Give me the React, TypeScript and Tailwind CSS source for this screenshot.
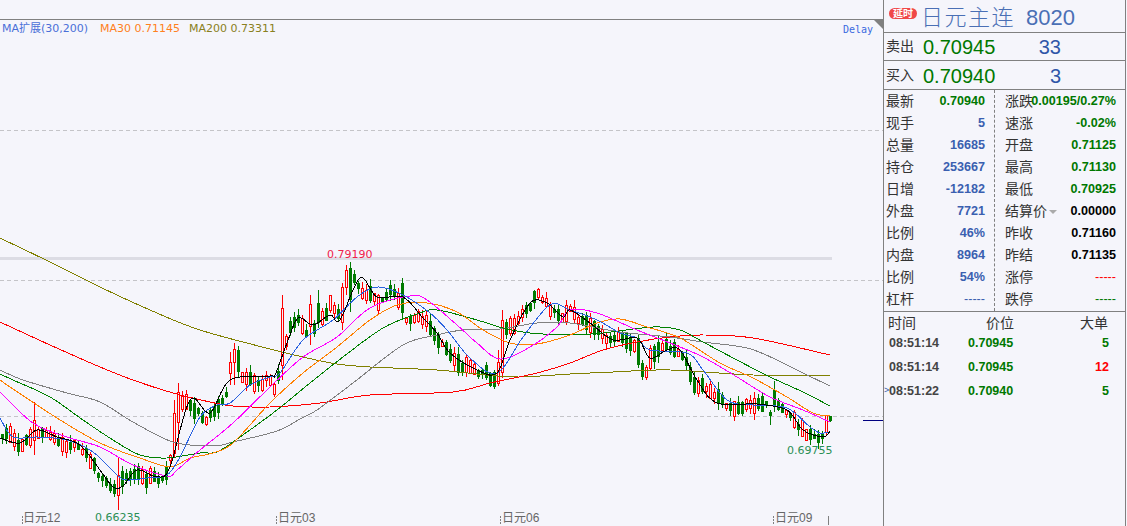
const LINES: { color: string; pts: number[][] }[] = [
  { color: "#808000", pts: [[0,238],[50,262],[100,287],[150,310],[200,330],[270,349],[303,357],[337,364],[370,367],[437,370],[487,375],[520,377],[570,374],[613,372],[670,370],[753,375],[830,375]] },
  { color: "#ff0000", pts: [[0,322],[50,345],[100,367],[133,380],[173,393],[210,402],[233,406],[270,407],[320,403],[370,395],[453,392],[490,383],[537,373],[570,363],[603,350],[637,342],[670,337],[703,335],[753,338],[830,355]] },
  { color: "#808080", pts: [[0,370],[23,380],[67,393],[100,402],[133,422],[173,442],[213,446],[233,442],[277,431],[300,419],[317,410],[353,383],[403,345],[437,335],[463,330],[500,329],[537,323],[570,323],[620,332],[670,337],[703,342],[747,348],[777,360],[803,373],[830,386]] },
  { color: "#008000", pts: [[0,374],[13,380],[50,397],[83,420],[113,440],[140,455],[167,458],[200,453],[217,452],[240,437],[277,410],[310,383],[343,357],[383,328],[417,314],[437,310],[477,320],[503,328],[530,333],[570,335],[603,333],[653,327],[680,330],[703,342],[737,360],[770,377],[803,392],[830,406]] },
  { color: "#ff8000", pts: [[0,380],[10,387],[57,418],[100,443],[140,458],[170,467],[190,458],[213,453],[233,443],[270,403],[303,373],[337,347],[370,320],[397,305],[427,303],[457,312],[483,330],[510,343],[537,344],[570,335],[597,323],[620,319],[647,327],[680,338],[720,363],[753,378],[787,397],[813,413],[830,416]] },
  { color: "#ff00ff", pts: [[0,392],[33,423],[67,437],[100,447],[133,465],[167,476],[177,470],[200,450],[233,423],[270,387],[303,357],[337,337],[370,308],[410,296],[427,300],[457,325],[477,343],[500,359],[530,347],[557,327],[570,310],[597,313],[637,330],[670,343],[703,357],[737,377],[770,397],[803,410],[830,422]] },
  { color: "#2a62e0", pts: [[0,418],[13,437],[37,437],[67,440],[93,452],[117,475],[127,480],[147,478],[167,475],[180,457],[200,417],[217,405],[230,403],[250,385],[270,377],[280,373],[303,340],[333,320],[357,297],[378,287],[403,295],[430,313],[447,330],[470,358],[497,373],[523,337],[550,305],[570,310],[597,320],[620,333],[637,338],[650,350],[687,353],[703,370],[727,400],[753,405],[787,408],[810,427],[820,433],[830,432]] },
  { color: "#000000", pts: [[0,438],[20,443],[37,430],[57,437],[80,445],[100,470],[113,487],[123,486],[137,470],[157,477],[170,467],[190,400],[210,413],[230,380],[270,376],[275,375],[287,343],[298,318],[313,325],[330,315],[340,320],[360,278],[377,297],[403,297],[423,318],[437,333],[450,353],[477,370],[497,373],[510,340],[530,303],[547,303],[563,317],[570,310],[590,323],[613,340],[637,338],[650,358],[667,350],[680,350],[697,380],[717,403],[757,404],[787,410],[803,430],[823,437],[830,431]] },
];

// centre of the candle body along the chart
const PATH = [[0,436],[8,433],[18,444],[28,440],[38,435],[48,436],[58,442],[68,447],[78,445],[88,455],[96,470],[104,483],[112,490],[128,476],[136,470],[144,478],[152,478],[160,480],[168,470],[174,430],[178,405],[185,400],[195,410],[205,420],[212,415],[222,400],[232,385],[237,375],[243,378],[248,375],[258,385],[270,378],[275,390],[280,370],[285,345],[292,322],[298,318],[305,335],[310,340],[318,313],[325,318],[330,300],[340,320],[347,290],[350,275],[355,280],[360,290],[370,295],[378,300],[385,295],[392,288],[398,298],[405,320],[410,322],[418,318],[425,322],[432,330],[440,345],[447,350],[455,360],[462,365],[470,365],[478,372],[485,372],[492,382],[497,375],[500,340],[510,325],[518,322],[525,308],[530,305],[536,295],[540,297],[548,305],[555,315],[562,318],[570,310],[580,320],[590,325],[600,335],[610,340],[620,338],[632,345],[638,352],[650,358],[660,345],[668,348],[677,352],[685,360],[692,378],[700,385],[710,390],[720,400],[728,405],[735,410],[745,403],[755,405],[765,403],[775,402],[785,410],[795,422],[805,433],[815,437],[822,434],[830,420]];

// top, bottom, high, low, rising
const BIG: Record<number, number[]> = {
  34: [420,440,402,455,1], 118: [475,495,458,510,1], 174: [413,453,400,458,1], 178: [392,422,383,450,1],
  230: [362,373,352,385,1], 234: [349,362,343,385,1], 238: [350,372,346,378,0],
  282: [308,365,295,380,1], 310: [304,326,295,345,1], 318: [303,323,290,328,0], 342: [287,322,283,330,1],
  346: [270,287,265,295,1], 350: [268,300,262,312,0], 402: [283,313,278,320,0], 458: [354,373,347,376,0],
  498: [362,383,350,386,1], 502: [320,372,310,378,1], 638: [338,365,335,368,0], 642: [363,377,360,380,0],
  646: [367,377,365,380,1], 650: [348,368,345,370,1], 690: [367,382,362,385,0], 694: [377,393,372,395,0],
  698: [380,393,377,397,1], 770: [412,416,410,425,0], 774: [390,407,381,412,0], 826: [415,432,415,436,1], 830: [416,421,416,422,0],
};

function yAt(x: number) {
  for (let i = 1; i < PATH.length; i++) {
    const [x0, y0] = PATH[i - 1];
    const [x1, y1] = PATH[i];
    if (x <= x1) return y0 + ((y1 - y0) * (x - x0)) / (x1 - x0);
  }
  return 420;
}

function noise(n: number) {
  const s = Math.sin(n * 12.9898) * 43758.5453;
  return s - Math.floor(s);
}

function makeCandles() {
  const out: { x: number; t: number; b: number; h: number; l: number; up: boolean }[] = [];
  for (let x = 2; x <= 830; x += 4) {
    const big = BIG[x];
    if (big) {
      out.push({ x, t: big[0], b: big[1], h: big[2], l: big[3], up: big[4] === 1 });
      continue;
    }
    const c = yAt(x) + (noise(x + 0.9) - 0.5) * 6;
    const size = 4 + noise(x) * 12;
    const t = Math.round(c - size / 2);
    const b = Math.round(c + size / 2);
    out.push({
      x, t, b,
      h: t - Math.round(noise(x + 0.3) * 7),
      l: b + Math.round(noise(x + 0.7) * 7),
      up: noise(x + 0.5) > 0.55,
    });
  }
  return out;
}

// smooth the traced points a little so the averages don't look like polylines
function curve(pts: number[][]) {
  let d = `M${pts[0][0]} ${pts[0][1]}`;
  for (let i = 0; i < pts.length - 1; i++) {
    const p0 = pts[Math.max(i - 1, 0)];
    const p1 = pts[i];
    const p2 = pts[i + 1];
    const p3 = pts[Math.min(i + 2, pts.length - 1)];
    const c1x = p1[0] + (p2[0] - p0[0]) / 6;
    const c1y = p1[1] + (p2[1] - p0[1]) / 6;
    const c2x = p2[0] - (p3[0] - p1[0]) / 6;
    const c2y = p2[1] - (p3[1] - p1[1]) / 6;
    d += ` C${c1x} ${c1y} ${c2x} ${c2y} ${p2[0]} ${p2[1]}`;
  }
  return d;
}

function Chart() {
  const candles = makeCandles();
  return (
    <div className="relative flex-1">
      <svg className="absolute inset-0 block" width="883" height="486" viewBox="0 39 883 486">
        <g stroke="#c4c4c8" strokeDasharray="4 3" shapeRendering="crispEdges">
          <line x1="0" x2="883" y1="130.5" y2="130.5" />
          <line x1="0" x2="883" y1="280.5" y2="280.5" />
          <line x1="0" x2="883" y1="416.5" y2="416.5" />
        </g>
        <rect x="0" y="257" width="832" height="3" fill="#dcdce4" />
        <g shapeRendering="crispEdges">
          {candles.map((c) => (
            <g key={c.x}>
              <line x1={c.x + 0.5} x2={c.x + 0.5} y1={c.h} y2={c.l} stroke={c.up ? "#ff0000" : "#007a00"} />
              {c.up ? (
                <rect x={c.x - 0.5} y={c.t + 0.5} width="2" height={Math.max(c.b - c.t, 1)} fill="#f5f5fb" stroke="#ff0000" />
              ) : (
                <rect x={c.x - 1} y={c.t} width="3" height={Math.max(c.b - c.t, 1)} fill="#007a00" />
              )}
            </g>
          ))}
        </g>
        {LINES.map((l) => (
          <path key={l.color} d={curve(l.pts)} fill="none" stroke={l.color} strokeWidth="1" shapeRendering="crispEdges" />
        ))}
        <line x1="863" x2="883" y1="420.5" y2="420.5" stroke="#000080" shapeRendering="crispEdges" />
        <g stroke="#808080" shapeRendering="crispEdges">
          <line x1="0" x2="883" y1="525.5" y2="525.5" />
          {[22, 276, 500, 773, 828].map((x) => (
            <line key={x} x1={x + 0.5} x2={x + 0.5} y1="516" y2="525" strokeDasharray={x === 828 ? undefined : "2 1"} />
          ))}
        </g>
      </svg>
      <span className="absolute left-[327px] top-[209px] font-['DejaVu_Sans',sans-serif] text-[11px] leading-[14px] text-[#f0204a]">0.79190</span>
      <span className="absolute left-[787px] top-[405px] font-['DejaVu_Sans',sans-serif] text-[11px] leading-[14px] text-[#2a8f55]">0.69755</span>
      <span className="absolute left-[95px] top-[472px] font-['DejaVu_Sans',sans-serif] text-[11px] leading-[14px] text-[#2a8f55]">0.66235</span>
      <span className="absolute left-[23px] top-[472px] text-[12px] leading-[14px] text-[#666666]">日元12</span>
      <span className="absolute left-[278px] top-[472px] text-[12px] leading-[14px] text-[#666666]">日元03</span>
      <span className="absolute left-[502px] top-[472px] text-[12px] leading-[14px] text-[#666666]">日元06</span>
      <span className="absolute left-[775px] top-[472px] text-[12px] leading-[14px] text-[#666666]">日元09</span>
    </div>
  );
}

const LEFT_ROWS = [
  ["最新", "0.70940", "text-[#007800]"],
  ["现手", "5", "text-[#3a5fb0]"],
  ["总量", "16685", "text-[#3a5fb0]"],
  ["持仓", "253667", "text-[#3a5fb0]"],
  ["日增", "-12182", "text-[#3a5fb0]"],
  ["外盘", "7721", "text-[#3a5fb0]"],
  ["比例", "46%", "text-[#3a5fb0]"],
  ["内盘", "8964", "text-[#3a5fb0]"],
  ["比例", "54%", "text-[#3a5fb0]"],
  ["杠杆", "-----", "text-[#3a5fb0] font-normal"],
];

const RIGHT_ROWS = [
  ["涨跌", "0.00195/0.27%", "text-[#007800]"],
  ["速涨", "-0.02%", "text-[#007800]"],
  ["开盘", "0.71125", "text-[#007800]"],
  ["最高", "0.71130", "text-[#007800]"],
  ["最低", "0.70925", "text-[#007800]"],
  ["结算价", "0.00000", "text-black"],
  ["昨收", "0.71160", "text-black"],
  ["昨结", "0.71135", "text-black"],
  ["涨停", "-----", "text-[#ff0000] font-normal"],
  ["跌停", "-----", "text-[#007800] font-normal"],
];

const TICKS = [
  ["08:51:14", "0.70945", "5", "text-[#007800]"],
  ["08:51:14", "0.70945", "12", "text-[#ff0000]"],
  ["08:51:22", "0.70940", "5", "text-[#007800]"],
];

function QuoteRow({ label, price, size }: { label: string; price: string; size: string }) {
  return (
    <>
      <span className="w-[37px] text-[14px] text-[#333333]">{label}</span>
      <span className="w-[72px] font-['Liberation_Sans',sans-serif] text-[20px] text-[#007800]">{price}</span>
      <span className="w-[66px] text-right font-['Liberation_Sans',sans-serif] text-[20px] text-[#2f56a8]">{size}</span>
    </>
  );
}

function StatRow({ label, value, color }: { label: string; value: string; color: string }) {
  return (
    <div className="flex h-[22px] items-center">
      <span className="w-[25px] shrink-0 whitespace-nowrap text-[14px] text-[#333333]">
        {label}
        {label === "结算价" && <span className="ml-[2px] inline-block border-x-[4px] border-t-[4px] border-x-transparent border-t-[#aaaaaa] align-middle" />}
      </span>
      <span className={`ml-auto whitespace-nowrap text-[12.6px] font-bold ${color}`}>{value}</span>
    </div>
  );
}

function SidePanel() {
  return (
    <div className="flex h-full w-[243px] flex-col border-x border-[#808080]">
      <div className="flex h-[33px] items-center border-b border-[#808080] pl-[5px]">
        <span className="mb-[5px] rounded-full bg-[#f04848] px-[4px] text-[10px] font-bold leading-[11px] text-white">延时</span>
        <span className="ml-[4px] mt-[3px] text-[22px] font-light leading-[32px] tracking-[1.5px] text-[#4a6fb5]">日元主连</span>
        <span className="ml-[11px] mt-[3px] font-['Liberation_Sans',sans-serif] text-[22px] leading-[32px] text-[#4a6fb5]">8020</span>
      </div>
      <div className="flex h-[28px] items-center border-b border-[#808080] pl-[2px]">
        <QuoteRow label="卖出" price="0.70945" size="33" />
      </div>
      <div className="flex h-[29px] items-center border-b border-[#808080] pl-[2px] pt-[1px]">
        <QuoteRow label="买入" price="0.70940" size="3" />
      </div>
      <div className="flex h-[222px] border-b border-[#808080]">
        <div className="w-[111px] border-r border-dashed border-[#808080] pl-[2px] pr-[9px]">
          {LEFT_ROWS.map(([l, v, c], i) => <StatRow key={i} label={l} value={v} color={c} />)}
        </div>
        <div className="flex-1 pl-[10px] pr-[9px]">
          {RIGHT_ROWS.map(([l, v, c], i) => <StatRow key={i} label={l} value={v} color={c} />)}
        </div>
      </div>
      <div className="flex h-[19px] items-center whitespace-nowrap pl-[4px] pt-[3px] text-[14px] text-[#333333]">
        <span className="w-[98px]">时间</span>
        <span className="w-[94px]">价位</span>
        <span>大单</span>
      </div>
      {TICKS.map(([t, p, n, c], i) => (
        <div key={i} className="relative flex h-[24px] items-center pl-[5px] text-[12.5px] font-bold">
          {i === 2 && <span className="absolute left-[0px] text-[9px] font-normal text-[#2f56a8]">&gt;</span>}
          <span className="w-[79px] text-[#444444]">{t}</span>
          <span className="w-[60px] text-[#007800]">{p}</span>
          <span className={`w-[81px] text-right ${c}`}>{n}</span>
        </div>
      ))}
    </div>
  );
}

export default function App() {
  return (
    <div className="flex h-[526px] w-[1127px] overflow-hidden bg-[#f5f5fb] font-['Liberation_Sans','Noto_Sans_CJK_SC',sans-serif]">
      <div className="relative flex w-[883px] flex-col">
        <div className="h-[20px] border-b border-[#808080]" />
        <div className="flex h-[19px] items-center pl-[2px] pb-[1px] font-['DejaVu_Sans','Noto_Sans_CJK_SC',sans-serif] text-[11px]">
          <span className="w-[98px] text-[#4a6fd8]">MA扩展(30,200)</span>
          <span className="w-[89px] text-[#ff8020]">MA30 0.71145</span>
          <span className="text-[#8a8020]">MA200 0.73311</span>
          <span className="ml-auto mr-[10px] font-['DejaVu_Sans_Mono',monospace] text-[10px] text-[#3a6ae0]">Delay</span>
        </div>
        <Chart />
        <div className="absolute right-0 top-[19px] border-l-[10px] border-t-[10px] border-l-transparent border-t-[#808080]" />
      </div>
      <SidePanel />
    </div>
  );
}
